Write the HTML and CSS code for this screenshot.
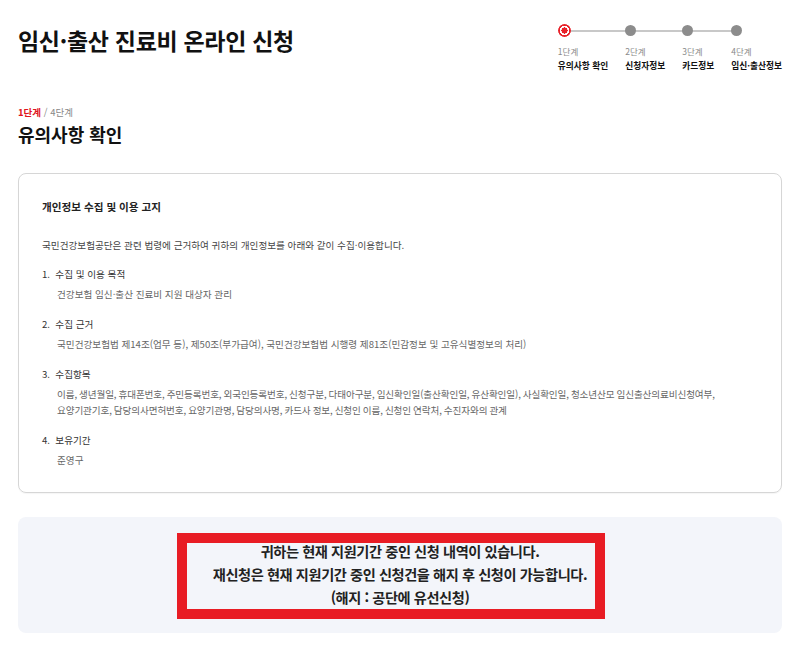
FILE: index.html
```html
<!DOCTYPE html>
<html lang="ko">
<head>
    <meta charset="UTF-8">
    <meta name="viewport" content="width=device-width, initial-scale=1.0">
    <title>임신·출산 진료비 온라인 신청</title>
    <link rel="stylesheet" href="styles.css">
</head>

<body>
    <div class="container">

        <div class="header">
            <h1>임신·출산 진료비 온라인 신청</h1>
            <div class="stepper">
                <div class="step">
                    <div class="dot active"></div>
                    <div class="step-no">1단계</div>
                    <div class="step-name">유의사항 확인</div>
                </div>
                <div class="step">
                    <div class="dot"></div>
                    <div class="step-no">2단계</div>
                    <div class="step-name">신청자정보</div>
                </div>
                <div class="step">
                    <div class="dot"></div>
                    <div class="step-no">3단계</div>
                    <div class="step-name">카드정보</div>
                </div>
                <div class="step">
                    <div class="dot"></div>
                    <div class="step-no">4단계</div>
                    <div class="step-name">임신·출산정보</div>
                </div>
            </div>
        </div>

        <div class="step-count"><b>1단계</b> / 4단계</div>
        <h2>유의사항 확인</h2>

        <div class="notice-card">
            <h3>개인정보 수집 및 이용 고지</h3>
            <p class="intro">국민건강보험공단은 관련 법령에 근거하여 귀하의 개인정보를 아래와 같이 수집·이용합니다.</p>
            <ol class="terms">
                <li>
                    <div class="term-title">1.&nbsp; 수집 및 이용 목적</div>
                    <div class="term-desc">건강보험 임신·출산 진료비 지원 대상자 관리</div>
                </li>
                <li>
                    <div class="term-title">2.&nbsp; 수집 근거</div>
                    <div class="term-desc">국민건강보험법 제14조(업무 등), 제50조(부가급여), 국민건강보험법 시행령 제81조(민감정보 및 고유식별정보의 처리)</div>
                </li>
                <li>
                    <div class="term-title">3.&nbsp; 수집항목</div>
                    <div class="term-desc tight">이름, 생년월일, 휴대폰번호, 주민등록번호, 외국인등록번호, 신청구분, 다태아구분, 임신확인일(출산확인일, 유산확인일), 사실확인일, 청소년산모 임신출산의료비신청여부,<br>요양기관기호, 담당의사면허번호, 요양기관명, 담당의사명, 카드사 정보, 신청인 이름, 신청인 연락처, 수진자와의 관계</div>
                </li>
                <li>
                    <div class="term-title">4.&nbsp; 보유기간</div>
                    <div class="term-desc">준영구</div>
                </li>
            </ol>
        </div>

        <div class="alert-box">
            <p>귀하는 현재 지원기간 중인 신청 내역이 있습니다.</p>
            <p>재신청은 현재 지원기간 중인 신청건을 해지 후 신청이 가능합니다.</p>
            <p>(해지 : 공단에 유선신청)</p>
            <div class="highlight"></div>
        </div>

    </div>
</body>

</html>
```

FILE: styles.css
```css
html {
    background-color: #fff;
}

body {
    margin: 0;
    font-family: "Noto Sans CJK KR", "Noto Sans", sans-serif;
    color: #111;
}

.container {
    padding: 0 18px;
}

.header {
    display: flex;
    justify-content: space-between;
    align-items: flex-start;
    padding-top: 24px;
}

.header h1 {
    margin: 0;
    font-size: 23px;
    line-height: 32px;
    font-weight: 700;
    letter-spacing: -0.3px;
}

.stepper {
    display: flex;
    gap: 17px;
    position: relative;
}

.stepper::before {
    content: "";
    position: absolute;
    top: 5.5px;
    left: 6px;
    right: 44px;
    height: 2px;
    background-color: #c8c8c8;
}

.step {
    display: flex;
    flex-direction: column;
    position: relative;
}

.dot {
    width: 11px;
    height: 11px;
    margin-top: 1px;
    margin-bottom: 1px;
    border-radius: 50%;
    background-color: #8c8c8c;
}

.dot.active {
    width: 13px;
    height: 13px;
    margin: 0;
    background: radial-gradient(circle, #e8222a 0 3px, #fff 3.2px 4.6px, #e8222a 4.8px 6.5px, transparent 6.6px);
}

.step-no {
    margin-top: 8px;
    font-size: 8.5px;
    line-height: 12px;
    color: #8a8a8a;
}

.step-name {
    margin-top: 2px;
    font-size: 8.7px;
    line-height: 14px;
    font-weight: 700;
    white-space: nowrap;
}

.step-count {
    margin-top: 32px;
    font-size: 9.5px;
    line-height: 14px;
    color: #888;
}

.step-count b {
    color: #e0141e;
}

h2 {
    margin: 3px 0 0;
    font-size: 18px;
    line-height: 24px;
    font-weight: 700;
}

.notice-card {
    margin-top: 27px;
    border: 1px solid #d6d6d6;
    border-radius: 8px;
    padding: 24px 23px;
    box-shadow: 0 1px 1px rgba(0, 0, 0, 0.04);
}

.notice-card h3 {
    margin: 0;
    font-size: 10.6px;
    line-height: 18px;
    font-weight: 700;
    color: #222;
}

.intro {
    margin: 20px 0 0;
    font-size: 9.6px;
    line-height: 18px;
    color: #444;
}

.terms {
    list-style: none;
    margin: 11px 0 0;
    padding: 0;
}

.terms li + li {
    margin-top: 13px;
}

.term-title {
    font-size: 9.6px;
    line-height: 18px;
    color: #333;
}

.term-desc {
    margin-top: 3px;
    padding-left: 15px;
    font-size: 9.6px;
    line-height: 16px;
    color: #666;
}

.term-desc.tight {
    word-spacing: -0.5px;
    letter-spacing: -0.12px;
}

.alert-box {
    position: relative;
    margin-top: 24px;
    padding: 23px 0 24px;
    border-radius: 8px;
    background-color: #f3f5fa;
    text-align: center;
}

.alert-box p {
    margin: 0;
    font-size: 14.2px;
    line-height: 23px;
    font-weight: 700;
    color: #222;
    letter-spacing: -0.4px;
}

.highlight {
    position: absolute;
    left: 159px;
    top: 16px;
    width: 428px;
    height: 86px;
    box-sizing: border-box;
    border: 10px solid #e81c24;
}
```
